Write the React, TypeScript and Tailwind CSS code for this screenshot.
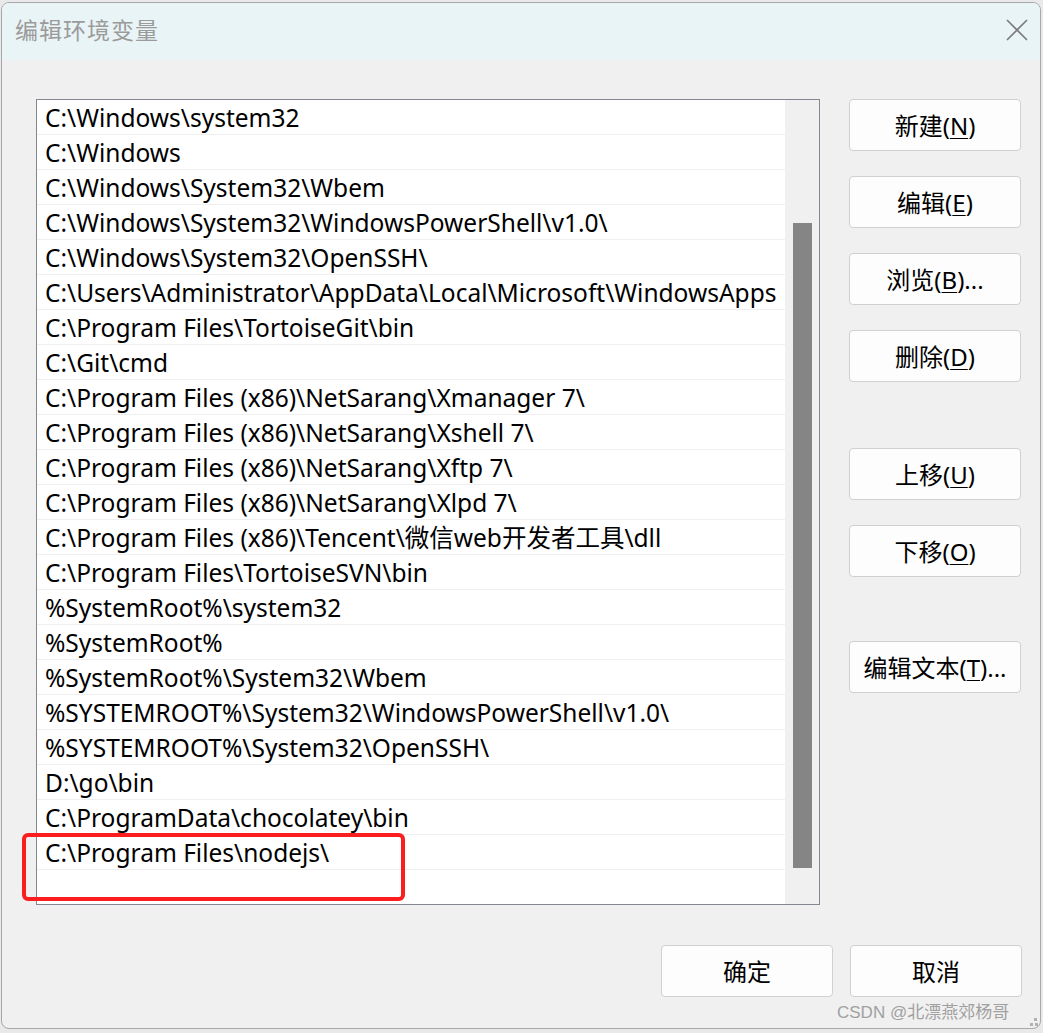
import React from 'react';

const paths = [
  'C:\\Windows\\system32',
  'C:\\Windows',
  'C:\\Windows\\System32\\Wbem',
  'C:\\Windows\\System32\\WindowsPowerShell\\v1.0\\',
  'C:\\Windows\\System32\\OpenSSH\\',
  'C:\\Users\\Administrator\\AppData\\Local\\Microsoft\\WindowsApps',
  'C:\\Program Files\\TortoiseGit\\bin',
  'C:\\Git\\cmd',
  'C:\\Program Files (x86)\\NetSarang\\Xmanager 7\\',
  'C:\\Program Files (x86)\\NetSarang\\Xshell 7\\',
  'C:\\Program Files (x86)\\NetSarang\\Xftp 7\\',
  'C:\\Program Files (x86)\\NetSarang\\Xlpd 7\\',
  'C:\\Program Files (x86)\\Tencent\\微信web开发者工具\\dll',
  'C:\\Program Files\\TortoiseSVN\\bin',
  '%SystemRoot%\\system32',
  '%SystemRoot%',
  '%SystemRoot%\\System32\\Wbem',
  '%SYSTEMROOT%\\System32\\WindowsPowerShell\\v1.0\\',
  '%SYSTEMROOT%\\System32\\OpenSSH\\',
  'D:\\go\\bin',
  'C:\\ProgramData\\chocolatey\\bin',
  'C:\\Program Files\\nodejs\\',
];

const font = { fontFamily: '"Noto Sans", "Noto Sans CJK SC", sans-serif' };

const Btn: React.FC<{ label: string; hot?: string; tail?: string; className?: string }> = ({ label, hot, tail, className }) => (
  <button
    className={`w-[172px] h-[52px] bg-[#fdfdfd] border border-[#d0d0d0] rounded-[4px] text-[24px] text-black flex items-center justify-center pt-[1px] ${className || ''}`}
  >
    {label}
    {hot && (
      <>
        (<span className="underline underline-offset-[3px] decoration-1">{hot}</span>)
      </>
    )}
    {tail}
  </button>
);

const App: React.FC = () => {
  return (
    <div className="w-[1043px] h-[1033px] bg-[#e9e9e9] relative overflow-hidden" style={font}>
      <div className="ml-[1px] mt-[2px] w-[1040px] h-[1027px] rounded-[8px] border border-[#a8a8a8] overflow-hidden flex flex-col bg-[#f0f0f0]">
        {/* title bar */}
        <div className="h-[57px] shrink-0 bg-[#e9f4f6] flex items-center justify-between pl-[13px] pr-[12px]">
          <span className="text-[23px] text-[#9b9b9b] tracking-[1px] -mt-[2px]">编辑环境变量</span>
          <svg width="22" height="22" viewBox="0 0 22 22" className="-mt-[3px]">
            <path d="M1 1 L21 21 M21 1 L1 21" stroke="#7a7a7a" strokeWidth="1.6" fill="none" />
          </svg>
        </div>

        {/* body */}
        <div className="flex pl-[34px] pt-[39px]">
          <div className="w-[784px] h-[806px] border border-[#838790] bg-white flex">
            <div className="flex-1 flex flex-col overflow-hidden">
              {paths.map((p, i) => (
                <div
                  key={i}
                  className="h-[35px] shrink-0 border-b border-[#efefef] flex items-center pl-[8px] pt-[3px] text-[24.5px] text-black whitespace-nowrap leading-none"
                >
                  {p}
                </div>
              ))}
              <div className="h-[34px] shrink-0" />
            </div>
            <div className="w-[34px] bg-[#f0f0f0] flex flex-col items-center pt-[123px]">
              <div className="w-[19px] h-[645px] bg-[#858585]" />
            </div>
          </div>

          <div className="ml-[29px] flex flex-col">
            <Btn label="新建" hot="N" />
            <Btn label="编辑" hot="E" className="mt-[25px]" />
            <Btn label="浏览" hot="B" tail="..." className="mt-[25px]" />
            <Btn label="删除" hot="D" className="mt-[25px]" />
            <Btn label="上移" hot="U" className="mt-[66px]" />
            <Btn label="下移" hot="O" className="mt-[25px]" />
            <Btn label="编辑文本" hot="T" tail="..." className="mt-[64px]" />
          </div>
        </div>

        <div className="flex justify-end gap-[17px] pr-[18px] mt-[40px]">
          <Btn label="确定" />
          <Btn label="取消" />
        </div>
      </div>

      {/* red highlight */}
      <div className="absolute left-[22px] top-[833px] w-[383px] h-[68px] border-4 border-solid border-[#fa1e1e] rounded-[6px]" />

      {/* watermark */}
      <div className="absolute left-[837px] top-[1000px] text-[17px] text-[#a0a0a0] whitespace-nowrap" style={{ fontFamily: '"Liberation Sans", "Noto Sans CJK SC", sans-serif' }}>
        CSDN @北漂燕郊杨哥
      </div>
      <div className="absolute left-[1030px] top-[1018px] flex flex-col gap-[2px]">
        <div className="w-[3px] h-[3px] bg-[#b0b0b0] ml-[4px]" />
        <div className="flex gap-[2px]">
          <div className="w-[3px] h-[3px] bg-[#b0b0b0]" />
          <div className="w-[3px] h-[3px] bg-[#b0b0b0]" />
        </div>
      </div>
    </div>
  );
};

export default App;
